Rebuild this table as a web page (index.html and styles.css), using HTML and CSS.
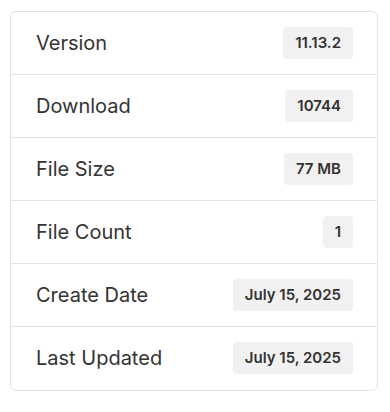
FILE: index.html
```html
<!DOCTYPE html>
<html lang="en">
<head>
<meta charset="utf-8">
<title>File info</title>
<link rel="stylesheet" href="styles.css">
</head>
<body>
<div class="card">
  <div class="row"><span class="label">Version</span><span class="badge">11.13.2</span></div>
  <div class="row"><span class="label">Download</span><span class="badge">10744</span></div>
  <div class="row"><span class="label">File Size</span><span class="badge">77 MB</span></div>
  <div class="row"><span class="label">File Count</span><span class="badge">1</span></div>
  <div class="row"><span class="label">Create Date</span><span class="badge">July 15, 2025</span></div>
  <div class="row"><span class="label">Last Updated</span><span class="badge">July 15, 2025</span></div>
</div>
</body>
</html>
```
FILE: styles.css
```css
html, body {
  margin: 0;
  padding: 0;
  background: #ffffff;
}
body {
  padding: 11px 12px 0 10px;
  font-family: Inter, "Noto Sans", sans-serif;
  color: #333333;
}
.card {
  width: 368px;
  box-sizing: border-box;
  border: 1px solid #e3e3e3;
  border-radius: 6px;
  background: #fff;
  padding-bottom: 1px;
}
.row {
  display: flex;
  align-items: center;
  justify-content: space-between;
  height: 62px;
  padding: 0 24px 0 25px;
  border-bottom: 1px solid #e3e3e3;
}
.row:last-child {
  border-bottom: none;
}
.label {
  font-size: 20px;
  font-weight: 400;
  color: #333;
}
.badge {
  font-size: 15px;
  font-weight: 600;
  line-height: 18px;
  padding: 7px 12px;
  background: #f1f1f1;
  border-radius: 4px;
  color: #333;
}
```
